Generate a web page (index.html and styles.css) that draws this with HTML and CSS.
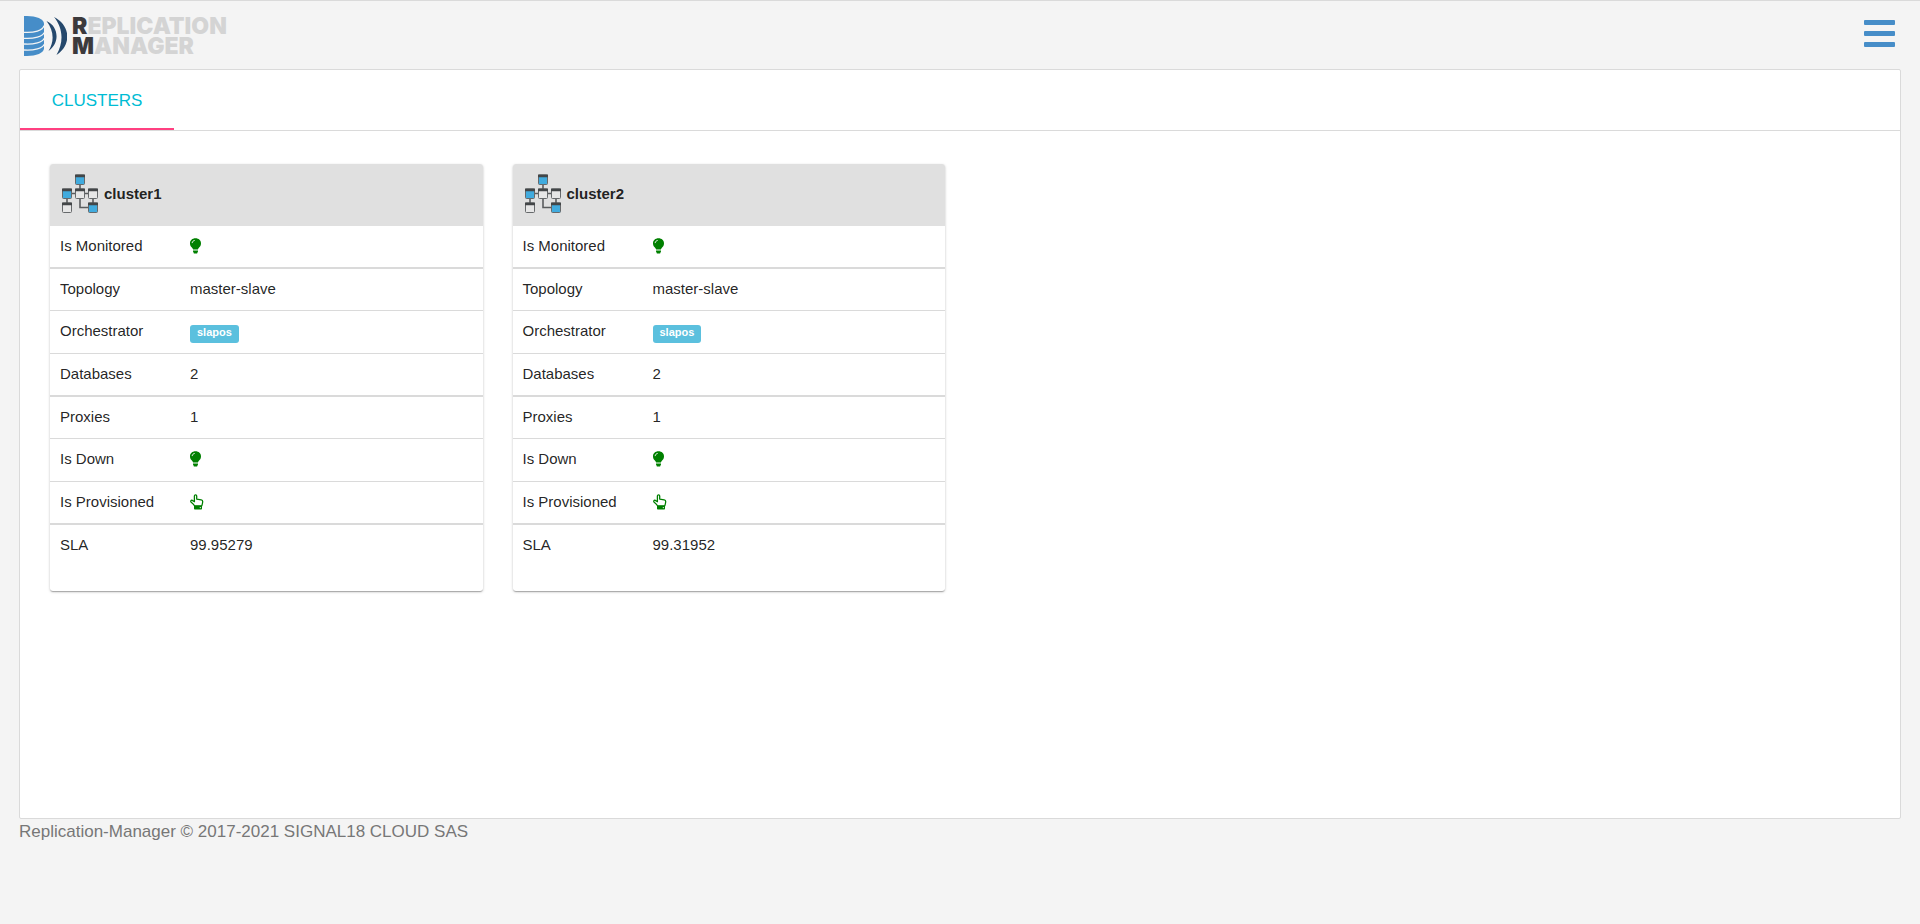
FILE: index.html
```html
<!DOCTYPE html>
<html lang="en">
<head>
<meta charset="utf-8">
<title>Replication Manager</title>
<link rel="stylesheet" href="styles.css">
</head>
<body>
<svg class="sprite" width="0" height="0" aria-hidden="true">
  <defs>
    <symbol id="bulb" viewBox="0 0 11 16">
      <path fill="#008000" d="M5.500.3C2.200.3 0 2.500 0 5.500c0 1.900.9 3.100 1.900 4.100.6.600 1 1.200 1.200 2h4.800c.2-.8.6-1.400 1.200-2 1-1 1.900-2.200 1.900-4.100C11 2.500 8.800.3 5.500.3z"/>
      <path fill="none" stroke="#fff" stroke-width=".9" stroke-linecap="round" d="M2.200 4.700c.2-1.200 1-2 2.100-2.200"/>
      <path fill="#008000" d="M3 12.600h5v1.200H3zM3.200 13.800h4.600l-.7 1.700H3.900z"/>
    </symbol>
    <symbol id="hand" viewBox="0 0 14 16">
      <path fill="none" stroke="#008000" stroke-width="1.300" stroke-linejoin="round" d="M4.400 7.700V2.100c0-1.700 2.300-1.700 2.300 0v3l4.500.8c1 .2 1.500.8 1.500 1.700 0 1.800-.5 2.800-.9 4.200H4.500C3.700 10.200 2.400 9.200 1.200 8.300.2 7.300 1 5.900 2.300 6.400z"/>
      <path fill="#008000" d="M4 11.700h8v3c0 .5-.3.800-.8.800H4.800c-.5 0-.8-.3-.8-.8z"/>
      <circle cx="10.300" cy="13.600" r=".6" fill="#fff"/>
    </symbol>
    <symbol id="nodes" viewBox="0 0 38 40">
      <path fill="none" stroke="#5a5c5e" stroke-width="1.600" d="M19 10v6M10 19.500h4M24 19.500h4M6 24v6M32 24v5M19 24v9.500h9"/>
      <g stroke="#66696b" stroke-width="1">
        <rect x="14.500" y="1" width="9" height="9.500" rx="1" fill="#41abde"/>
        <rect x="1.500" y="15" width="9" height="9.500" rx="1" fill="#41abde"/>
        <rect x="14.500" y="15" width="9" height="9.500" rx="1" fill="#e6e6e6"/>
        <rect x="27.500" y="15" width="9" height="9.500" rx="1" fill="#e6e6e6"/>
        <rect x="1.500" y="29" width="9" height="9.500" rx="1" fill="#e6e6e6"/>
        <rect x="27.500" y="29" width="9" height="9.500" rx="1" fill="#41abde"/>
      </g>
      <path fill="#434648" d="M14 .5h10v2.700H14zM1 14.500h10v2.700H1zM14 14.500h10v2.700H14zM27 14.500h10v2.700H27zM1 28.500h10v2.700H1zM27 28.500h10v2.700H27z"/>
    </symbol>
  </defs>
</svg>

<header class="topbar">
  <a class="logo" href="#" aria-label="Replication Manager">
    <svg class="logo-mark" viewBox="0 0 43 40" aria-hidden="true">
      <path fill="#468dc8" d="M0 0h3c9 0 17 3 17 7.500v25C20 37 12 40 3 40H0z"/>
      <path fill="none" stroke="#f4f4f4" stroke-width="1.300" d="M0 16.300c10 .7 19-1.800 20-6.600M0 22.300c10 .7 19-1.800 20-5.600M0 28c10 .7 19-1.800 20-5.600M0 34c10 .7 19-1.800 20-5.600"/>
      <path fill="#25486c" d="M22.500 5c12 5 14 22 2 30 6-10 5.500-20-2-30zM30 1c16.500 8 18 28 2.500 38C40 26 39 12 30 1z"/>
    </svg>
    <span class="logo-text">
      <span><b>R</b>EPLICATION</span>
      <span><b>M</b>ANAGER</span>
    </span>
  </a>
  <button class="menu" type="button" aria-label="Menu"><i></i><i></i><i></i></button>
</header>

<main class="panel">
  <nav class="tabs"><button class="tab" type="button">CLUSTERS</button></nav>
  <div class="cards">
    <section class="card">
      <h2 class="card-head"><svg class="nodes" aria-hidden="true"><use href="#nodes"/></svg>cluster1</h2>
      <table class="facts">
        <tr><th scope="row">Is Monitored</th><td><svg class="bulb" role="img" aria-label="yes"><use href="#bulb"/></svg></td></tr>
        <tr><th scope="row">Topology</th><td>master-slave</td></tr>
        <tr><th scope="row">Orchestrator</th><td><span class="badge">slapos</span></td></tr>
        <tr><th scope="row">Databases</th><td>2</td></tr>
        <tr><th scope="row">Proxies</th><td>1</td></tr>
        <tr><th scope="row">Is Down</th><td><svg class="bulb" role="img" aria-label="no"><use href="#bulb"/></svg></td></tr>
        <tr><th scope="row">Is Provisioned</th><td><svg class="hand" role="img" aria-label="yes"><use href="#hand"/></svg></td></tr>
        <tr><th scope="row">SLA</th><td>99.95279</td></tr>
      </table>
    </section>
    <section class="card">
      <h2 class="card-head"><svg class="nodes" aria-hidden="true"><use href="#nodes"/></svg>cluster2</h2>
      <table class="facts">
        <tr><th scope="row">Is Monitored</th><td><svg class="bulb" role="img" aria-label="yes"><use href="#bulb"/></svg></td></tr>
        <tr><th scope="row">Topology</th><td>master-slave</td></tr>
        <tr><th scope="row">Orchestrator</th><td><span class="badge">slapos</span></td></tr>
        <tr><th scope="row">Databases</th><td>2</td></tr>
        <tr><th scope="row">Proxies</th><td>1</td></tr>
        <tr><th scope="row">Is Down</th><td><svg class="bulb" role="img" aria-label="no"><use href="#bulb"/></svg></td></tr>
        <tr><th scope="row">Is Provisioned</th><td><svg class="hand" role="img" aria-label="yes"><use href="#hand"/></svg></td></tr>
        <tr><th scope="row">SLA</th><td>99.31952</td></tr>
      </table>
    </section>
  </div>
</main>

<footer class="footer">Replication-Manager © 2017-2021 SIGNAL18 CLOUD SAS</footer>
</body>
</html>
```

FILE: styles.css
```css
* {
  box-sizing: border-box;
}

body {
  margin: 0;
  min-height: 100vh;
  display: flex;
  flex-direction: column;
  padding: 0 19px;
  border-top: 1px solid #dadada;
  background: #f4f4f4;
  color: rgba(0, 0, 0, 0.87);
  font-family: "Liberation Sans", Arial, sans-serif;
  font-size: 15px;
  line-height: 20px;
}

button {
  border: 0;
  background: none;
  font-family: inherit;
  cursor: pointer;
}

.sprite {
  position: absolute;
}

.topbar {
  display: flex;
  justify-content: space-between;
  align-items: flex-start;
  height: 68px;
  padding: 15px 6px 0 5px;
}

.logo {
  display: flex;
  gap: 5px;
  text-decoration: none;
}

.logo-mark {
  width: 43px;
  height: 40px;
}

.logo-text {
  display: flex;
  flex-direction: column;
  color: #d4d4d4;
  font-family: Inter, Lato, sans-serif;
  font-size: 23px;
  font-weight: 900;
  line-height: 20px;
}

.logo-text b {
  color: #3c3a3c;
  font-weight: 900;
}

.menu {
  display: flex;
  flex-direction: column;
  gap: 6px;
  padding: 4px 0;
}

.menu i {
  width: 31px;
  height: 5px;
  border-radius: 1px;
  background: #468dc8;
}

.panel {
  flex: 1;
  border: 1px solid #dadada;
  border-radius: 2px;
  background: #fff;
}

.tabs {
  display: flex;
  border-bottom: 1px solid #dadada;
}

.tab {
  min-width: 154px;
  height: 60px;
  padding: 4px 30px 0;
  border-bottom: 2px solid #ff4081;
  color: #00bcd4;
  font-size: 17px;
}

.cards {
  display: grid;
  grid-template-columns: repeat(4, 1fr);
  gap: 30px;
  padding: 33px 30px;
}

.card {
  overflow: hidden;
  padding-bottom: 24px;
  border-radius: 3px;
  box-shadow: 0 1px 3px rgba(0, 0, 0, 0.2), 0 1px 1px rgba(0, 0, 0, 0.14), 0 2px 1px -1px rgba(0, 0, 0, 0.12);
}

.card-head {
  display: flex;
  align-items: center;
  gap: 5px;
  height: 62px;
  margin: 0;
  padding: 0 11px 2px;
  background: #e0e0e0;
  font-size: 15px;
}

.nodes {
  width: 38px;
  height: 40px;
}

.facts {
  width: 100%;
  border-spacing: 0;
  table-layout: fixed;
}

.facts th,
.facts td {
  height: 43px;
  padding: 10px 0;
  border-bottom: 1px solid #dadada;
  font-weight: normal;
  text-align: left;
  vertical-align: top;
}

.facts th {
  width: 140px;
  padding-left: 10px;
}

.facts tr:nth-child(3n + 1) > * {
  border-bottom-width: 2px;
}

.facts tr:nth-child(3n + 2) > * {
  height: 42px;
}

.facts tr:last-child > * {
  height: 42px;
  border-bottom: 0;
}

.bulb,
.hand {
  display: block;
  height: 16px;
  margin-top: 2px;
}

.bulb {
  width: 11px;
}

.hand {
  width: 14px;
}

.badge {
  display: block;
  width: max-content;
  height: 18px;
  margin-top: 4px;
  padding: 0 7px;
  border-radius: 3px;
  background: #5bc0de;
  color: #fff;
  font-size: 11px;
  font-weight: bold;
  line-height: 15px;
}

.footer {
  height: 105px;
  padding-top: 1px;
  color: #777;
  font-size: 17px;
  line-height: 24px;
}
```
